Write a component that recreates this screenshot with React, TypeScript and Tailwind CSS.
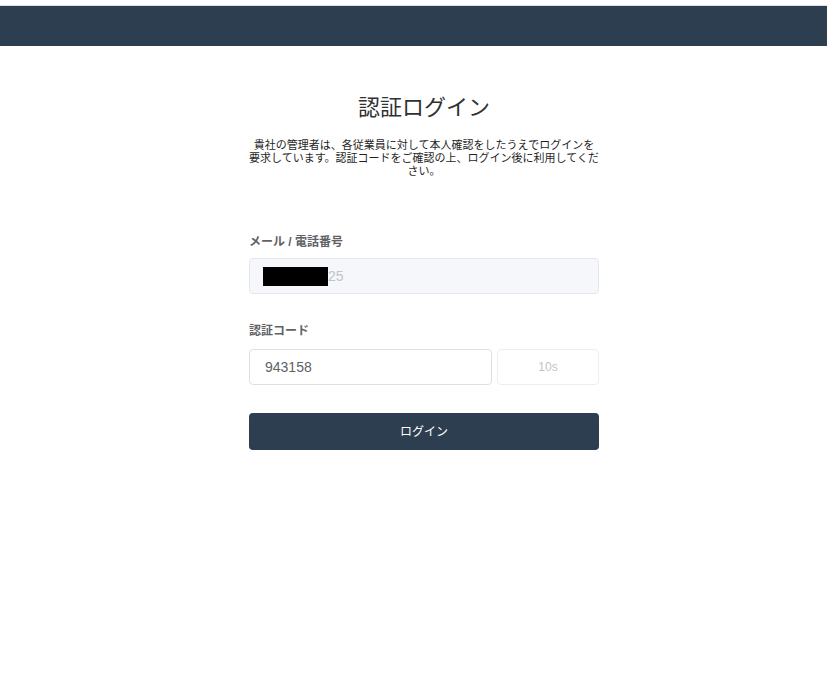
const font = { fontFamily: '"Liberation Sans", "Noto Sans CJK JP", sans-serif' };

export default function App() {
  return (
    <div className="min-h-[686px] bg-white" style={font}>
      <div className="pt-[5px]">
        <header className="h-[41px] border-t border-[#dcdfe6] bg-[#2c3e50]" />
      </div>

      <main className="flex justify-center pl-[21px]">
        <div className="w-[350px]">
          <h1 className="mt-[47px] text-center text-[22px] leading-[30px] text-[#303133]">
            認証ログイン
          </h1>
          <p className="mx-auto mt-[16px] w-[350px] text-center text-[11px] leading-[13px] text-[#1f1f1f]">
            貴社の管理者は、各従業員に対して本人確認をしたうえでログインを要求しています。認証コードをご確認の上、ログイン後に利用してください。
          </p>

          <form className="mt-[55px]" onSubmit={(e) => e.preventDefault()}>
            <label className="block text-[12px] font-bold leading-[18px] text-[#606266]">
              メール / 電話番号
            </label>
            <div className="mt-[7px] flex h-[36px] items-center rounded-[4px] border border-[#e4e7ed] bg-[#f5f7fa] px-[13px]">
              <span className="h-[19px] w-[65px] bg-black" />
              <span className="text-[14px] text-[#c0c4cc]">25</span>
            </div>

            <label className="mt-[28px] block text-[12px] font-bold leading-[18px] text-[#606266]">
              認証コード
            </label>
            <div className="mt-[9px] flex gap-[5px]">
              <input
                defaultValue="943158"
                className="h-[36px] w-[243px] rounded-[4px] border border-[#dcdfe6] px-[15px] text-[14px] text-[#606266] outline-none"
              />
              <button
                type="button"
                disabled
                className="h-[36px] flex-1 rounded-[4px] border border-[#ebeef5] bg-white text-[12px] text-[#c0c4cc]"
              >
                10s
              </button>
            </div>

            <button
              type="submit"
              className="mt-[28px] h-[37px] w-full rounded-[4px] bg-[#2c3e50] text-[12px] text-white"
            >
              ログイン
            </button>
          </form>
        </div>
      </main>
    </div>
  );
}
